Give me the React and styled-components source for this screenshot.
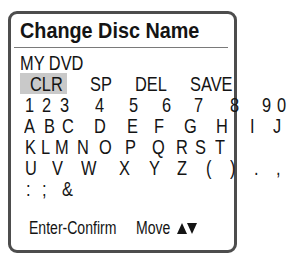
import React from 'react';
import styled, { createGlobalStyle } from 'styled-components';

const GlobalStyle = createGlobalStyle`
  body {
    margin: 0;
    background: #ffffff;
  }
`;

const Frame = styled.div`
  box-sizing: border-box;
  margin: 11px 0 0 8px;
  width: 229px;
  height: 242px;
  border: 3px solid #4d4d4d;
  border-radius: 9px;
  padding: 5px 0 0 9px;
  font-family: 'Liberation Sans', Arial, sans-serif;
  color: #141414;
`;

const Header = styled.div`
  margin: 0 6px 0 -6px;
  padding: 0 0 4px 6px;
  border-bottom: 1px solid #7a7a7a;
`;

const Title = styled.h1`
  margin: 0;
  font-size: 22px;
  line-height: 24px;
  font-weight: 700;
  white-space: nowrap;
  transform: scaleX(0.9);
  transform-origin: 0 50%;
`;

// the OSD uses a condensed face; squeeze the regular text horizontally
const Narrow = styled.span`
  display: inline-block;
  transform: scaleX(0.78);
  transform-origin: 0 50%;
`;

const Line = styled.div`
  display: flex;
  width: max-content;
  font-size: 21px;
  line-height: 21px;
  white-space: nowrap;
  padding-left: ${(p) => p.$pad || 0}px;
`;

const DiscName = styled(Line)`
  margin-top: 4px;
`;

const Key = styled.div`
  box-sizing: border-box;
  width: ${(p) => p.$w}px;
  padding-left: ${(p) => p.$in || 0}px;
  background: ${(p) => (p.$active ? '#c9c9c9' : 'transparent')};
`;

const Cell = styled.span`
  display: inline-block;
  width: ${(p) => p.$w}px;
`;

const Footer = styled.div`
  display: flex;
  align-items: center;
  margin-top: 19px;
  padding-left: 9px;
  font-size: 18px;
  line-height: 20px;
  white-space: nowrap;
`;

const Hint = styled.span`
  display: inline-block;
  width: ${(p) => p.$w}px;
`;

const Arrows = styled.svg`
  margin-top: 1px;
`;

const ROW_LEFT = 21;

const rows = [
  [['1', 26], ['2', 43], ['3', 61], ['4', 96], ['5', 130], ['6', 163], ['7', 195], ['8', 231], ['9', 263], ['0', 278]],
  [['A', 25], ['B', 45], ['C', 63], ['D', 95], ['E', 128], ['F', 155], ['G', 185], ['H', 217], ['I', 251], ['J', 274]],
  [['K', 26], ['L', 42], ['M', 56], ['N', 78], ['O', 100], ['P', 126], ['Q', 153], ['R', 177], ['S', 196], ['T', 216]],
  [['U', 26], ['V', 53], ['W', 82], ['X', 120], ['Y', 150], ['Z', 178], ['(', 207], [')', 231], ['.', 255], [',', 277]],
  [[':', 27], [';', 43], ['&', 63]],
];

function CharRow({ chars }) {
  return (
    <Line $pad={chars[0][1] - ROW_LEFT}>
      {chars.map(([c, x], i) => {
        const next = chars[i + 1];
        return (
          <Cell key={c} $w={next ? next[1] - x : 20}>
            <Narrow>{c}</Narrow>
          </Cell>
        );
      })}
    </Line>
  );
}

export default function App() {
  return (
    <>
      <GlobalStyle />
      <Frame>
        <Header>
          <Title>Change Disc Name</Title>
        </Header>
        <DiscName>
          <Narrow>MY DVD</Narrow>
        </DiscName>
        <Line $pad={-6}>
          <Key $w={47} $in={10} $active>
            <Narrow>CLR</Narrow>
          </Key>
          <Key $w={23} />
          <Key $w={45}>
            <Narrow>SP</Narrow>
          </Key>
          <Key $w={55}>
            <Narrow>DEL</Narrow>
          </Key>
          <Key $w={50}>
            <Narrow>SAVE</Narrow>
          </Key>
        </Line>
        {rows.map((r) => (
          <CharRow key={r[0][0]} chars={r} />
        ))}
        <Footer>
          <Hint $w={107}>
            <Narrow>Enter-Confirm</Narrow>
          </Hint>
          <Hint $w={41}>
            <Narrow>Move</Narrow>
          </Hint>
          <Arrows width="20" height="11" viewBox="0 0 20 11">
            <polygon points="0,11 5,0 10,11" fill="#141414" />
            <polygon points="10,0 20,0 15,11" fill="#141414" />
          </Arrows>
        </Footer>
      </Frame>
    </>
  );
}
